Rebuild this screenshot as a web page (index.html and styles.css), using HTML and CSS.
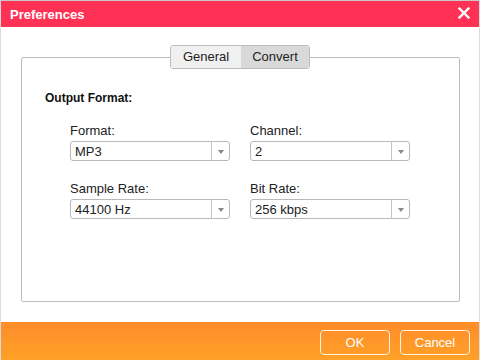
FILE: index.html
```html
<!DOCTYPE html>
<html>
    <head>
        <title>Preferences</title>
        <link rel="stylesheet" href="styles.css">
    </head>
    <body>
        <div class="window">
            <div class="titlebar">
                <span class="title">Preferences</span>
                <span class="close">
                    <svg width="12" height="12" viewBox="0 0 12 12">
                        <path d="M1.5 1.5 L10.5 10.5 M10.5 1.5 L1.5 10.5" stroke="#fff" stroke-width="2.4" stroke-linecap="square"/>
                    </svg>
                </span>
            </div>

            <div class="content">
                <div class="panel">
                    <div class="tabs">
                        <div class="tab">General</div>
                        <div class="tab active">Convert</div>
                    </div>

                    <h4>Output Format:</h4>

                    <div class="fields">
                        <div class="field">
                            <label>Format:</label>
                            <div class="select"><span>MP3</span><i class="arrow"></i></div>
                        </div>
                        <div class="field">
                            <label>Channel:</label>
                            <div class="select"><span>2</span><i class="arrow"></i></div>
                        </div>
                        <div class="field">
                            <label>Sample Rate:</label>
                            <div class="select"><span>44100 Hz</span><i class="arrow"></i></div>
                        </div>
                        <div class="field">
                            <label>Bit Rate:</label>
                            <div class="select"><span>256 kbps</span><i class="arrow"></i></div>
                        </div>
                    </div>
                </div>
            </div>

            <div class="footer">
                <button>OK</button>
                <button>Cancel</button>
            </div>
        </div>
    </body>
</html>
```

FILE: styles.css
```css
body {
  margin: 0;
  padding: 0;
  font-family: 'Liberation Sans', Arial, sans-serif;
  font-size: 13px;
  color: #222;
}

.window {
  width: 480px;
  height: 360px;
  box-sizing: border-box;
  border-top: 1px solid #c8c8c8;
  border-left: 1px solid #dcdcdc;
  border-right: 1px solid #dcdcdc;
  display: flex;
  flex-direction: column;
  background: #fff;
}

.titlebar {
  height: 26px;
  background: #ff3256;
  display: flex;
  align-items: center;
  justify-content: space-between;
  padding: 0 9px 0 9px;
}

.title {
  color: #fff;
  font-weight: bold;
  font-size: 13px;
}

.close {
  display: flex;
  margin-top: -2px;
}

.content {
  flex: 1;
  padding: 30px 19px 20px 20px;
}

.panel {
  height: 100%;
  box-sizing: border-box;
  border: 1px solid #bcbcbc;
  border-radius: 2px;
  padding: 0 0 0 23px;
}

.tabs {
  display: flex;
  width: 138px;
  margin: -13px auto 0 auto;
  border: 1px solid #bdbdbd;
  border-radius: 3px;
  overflow: hidden;
  position: relative;
  left: -12px;
}

.tab {
  height: 22px;
  line-height: 22px;
  text-align: center;
  width: 70px;
  background: #f0f0f0;
  color: #222;
}

.tab.active {
  width: 68px;
  background: #d9d9d9;
}

h4 {
  margin: 22px 0 0 0;
  font-size: 12px;
  font-weight: bold;
  color: #111;
}

.fields {
  display: grid;
  grid-template-columns: 160px 160px;
  column-gap: 20px;
  row-gap: 20px;
  margin: 18px 0 0 25px;
}

.field label {
  display: block;
  height: 18px;
  line-height: 16px;
  color: #222;
}

.select {
  height: 20px;
  box-sizing: border-box;
  border: 1px solid #b9b9b9;
  border-radius: 3px;
  display: flex;
  align-items: center;
}

.select span {
  flex: 1;
  padding-left: 4px;
}

.arrow {
  width: 17px;
  height: 18px;
  border-left: 1px solid #c4c4c4;
  display: flex;
  align-items: center;
  justify-content: center;
}

.arrow::after {
  content: "";
  border-left: 3px solid transparent;
  border-right: 3px solid transparent;
  border-top: 4px solid #888;
  margin-top: 1px;
}

.footer {
  height: 38px;
  background: linear-gradient(#ff8c2b, #ffa127);
  display: flex;
  justify-content: flex-end;
  align-items: center;
  gap: 10px;
  padding-right: 9px;
}

.footer button {
  width: 70px;
  height: 25px;
  background: transparent;
  border: 1px solid #fff2e4;
  border-radius: 4px;
  color: #fff;
  font-family: 'Liberation Sans', Arial, sans-serif;
  font-size: 13px;
  cursor: pointer;
  margin-top: 3px;
}
```
